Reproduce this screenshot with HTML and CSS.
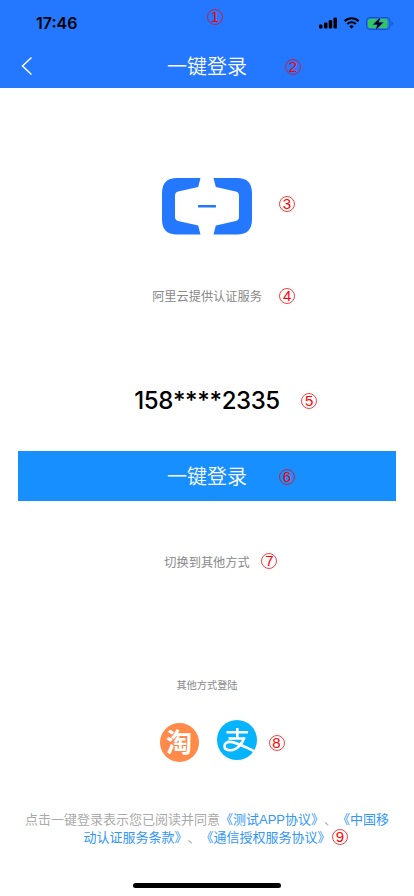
FILE: index.html
```html
<!DOCTYPE html>
<html lang="zh-CN">
<head>
<meta charset="utf-8">
<meta name="viewport" content="width=device-width, initial-scale=1">
<title>一键登录</title>
<link rel="stylesheet" href="styles.css">
</head>
<body>
<main class="screen">
  <header class="header">
    <div class="status">
      <span class="time">17:46</span>
      <svg class="status-icons" width="76" height="16" viewBox="0 0 76 16">
        <g fill="#000">
          <rect x="1" y="9.500" width="3.500" height="4" rx="1"/>
          <rect x="6" y="7.500" width="3.500" height="6" rx="1"/>
          <rect x="10.700" y="5" width="3.500" height="8.500" rx="1"/>
          <rect x="15.500" y="2.500" width="3.500" height="11" rx="1"/>
        </g>
        <g fill="none" stroke="#000" stroke-width="2.200">
          <path d="M26.600 6.100a10 10 0 0 1 14 0"/>
          <path d="M29.300 9a6.200 6.200 0 0 1 8.600 0"/>
        </g>
        <path d="M31.300 11.200a3.400 3.400 0 0 1 4.600 0L33.600 13.700z"/>
        <rect x="48.500" y="2.500" width="23.500" height="12" rx="3.500" fill="none" stroke="#1754b3"/>
        <path d="M73.500 6.500v4q1.400-.7 1.400-2t-1.400-2" fill="#1754b3"/>
        <rect x="50" y="4" width="19.500" height="9" rx="2" fill="#34c759"/>
        <path d="M62.300 2.500l-7 7h4.300l-1.800 5.200 7.200-7.200h-4.400z" fill="#000" stroke="#2478ff" stroke-width="1.200" paint-order="stroke"/>
      </svg>
      <i class="mark m1">1</i>
    </div>
    <div class="nav">
      <svg class="back" width="12" height="20" viewBox="0 0 12 20"><path d="M10.500 1.500L1.500 10l9 8.500" fill="none" stroke="#fff" stroke-width="1.500"/></svg>
      <h1 class="title">一键登录</h1>
      <i class="mark m2">2</i>
    </div>
  </header>
  <section class="brand">
    <svg class="logo" width="90" height="57" viewBox="0 0 90 57">
      <g fill="#2478ff">
        <path d="M38.500 0H15Q0 0 0 15v26.500q0 15 15 15h23.500l-2.300-9-20-4.500q-3.200-.8-3.200-4v-21.500q0-3.200 3.200-4l20-4.500z"/>
        <path d="M51.500 0H75q15 0 15 15v26.500q0 15-15 15H51.500l2.300-9 20-4.500q3.200-.8 3.200-4v-21.500q0-3.200-3.200-4l-20-4.500z"/>
        <rect x="36" y="27" width="18" height="2.600" rx=".5"/>
      </g>
    </svg>
    <i class="mark m3">3</i>
  </section>
  <p class="slogan">阿里云提供认证服务<i class="mark m4">4</i></p>
  <p class="phone">158<span class="stars">****</span>2335<i class="mark m5">5</i></p>
  <button class="login">一键登录<i class="mark m6">6</i></button>
  <p class="switch">切换到其他方式<i class="mark m7">7</i></p>
  <p class="other">其他方式登陆</p>
  <div class="providers">
    <span class="taobao">淘</span>
    <svg class="alipay" width="40" height="40" viewBox="0 0 40 40">
      <defs><clipPath id="disc"><circle cx="20" cy="20" r="20"/></clipPath></defs>
      <circle cx="20" cy="20" r="20" fill="#06b4fd"/>
      <g clip-path="url(#disc)" fill="none" stroke="#fff" stroke-width="2.600">
        <path d="M9.500 12.300h21.500M20.300 8v10.500M11.500 18.500h16"/>
        <path d="M27.500 17.300C25.500 23 20.500 30.200 13.500 30.200c-4 0-6-1.700-6-4 0-2.600 2.300-4.300 5.300-4.300 6 0 11.700 3.500 24.500 9.300"/>
      </g>
    </svg>
    <i class="mark m8">8</i>
  </div>
  <p class="legal">点击一键登录表示您已阅读并同意<a>《测试<span class="latin">APP</span>协议》</a>、<a>《中国移<br>动认证服务条款》</a>、<a>《通信授权服务协议》</a><i class="mark m9">9</i></p>
  <div class="home-bar"></div>
</main>
</body>
</html>
```

FILE: styles.css
```css
* { box-sizing: border-box; }
body {
  margin: 0;
  background: #fff;
  font-family: "Noto Sans CJK SC", sans-serif;
}
.screen {
  width: 414px;
  height: 896px;
  display: flex;
  flex-direction: column;
  align-items: center;
  overflow: hidden;
}
p, h1 { margin: 0; font-weight: 400; }
.header { width: 100%; height: 88px; background: #2478ff; }
.status {
  position: relative;
  height: 44px;
  padding: 2px 20px 0 36px;
  display: flex;
  justify-content: space-between;
  align-items: center;
}
.time { font: 600 16px/20px Inter, sans-serif; }
.nav {
  position: relative;
  height: 44px;
  padding-left: 21px;
  display: grid;
  grid-template-columns: 12px 1fr 33px;
  align-items: center;
}
.title { color: #fff; font-size: 20px; line-height: 30px; font-weight: 350; text-align: center; }
.brand { position: relative; margin-top: 90px; height: 57px; }
.logo { display: block; }
.slogan, .phone, .login, .switch, .providers, .legal { position: relative; }
.slogan { margin-top: 51px; font-size: 12.200px; line-height: 20px; color: #888; }
.phone { margin-top: 79px; font: 500 24px/32px Inter, sans-serif; letter-spacing: -.4px; color: #000; }
.stars { letter-spacing: -.3px; }
.login {
  width: 378px;
  height: 50px;
  margin-top: 34px;
  padding: 0;
  border: 0;
  background: #188fff;
  color: #fff;
  font: 350 20px/50px "Noto Sans CJK SC", sans-serif;
}
.switch { margin-top: 51px; font-size: 12.200px; line-height: 20px; color: #888; }
.other { margin-top: 105px; font-size: 10.200px; line-height: 16px; color: #888; }
.providers { margin-top: 27px; padding-left: 2px; height: 42px; display: flex; gap: 18px; }
.taobao {
  width: 39px;
  height: 39px;
  margin-top: 3px;
  border-radius: 50%;
  background: #ff8a4a;
  color: #fff;
  font-size: 26px;
  font-weight: 700;
  line-height: 36px;
  text-align: center;
}
.legal { margin-top: 48px; font-size: 13px; line-height: 18px; color: #aaa; text-align: center; white-space: nowrap; text-spacing-trim: space-all; }
.legal a { color: #3296fa; }
.latin { font-family: "Liberation Sans", sans-serif; line-height: 0; }
.home-bar { width: 148px; height: 5px; margin-top: 37px; border-radius: 3px; background: #000; flex: none; }
.mark {
  position: absolute;
  width: 16px;
  height: 16px;
  border: 1px solid rgba(255, 0, 0, .75);
  border-radius: 50%;
  font: 400 15px/13px "Liberation Sans", sans-serif;
  letter-spacing: 0;
  color: #f00;
  text-align: center;
}
.m1 { left: 207px; top: 9px; }
.m2 { left: 285px; top: 15px; }
.m3 { left: 117px; top: 18px; }
.m4 { left: 127px; top: 2px; }
.m5 { left: 167px; top: 8px; }
.m6 { left: 261px; top: 18px; }
.m7 { left: 97px; top: 1px; }
.m8 { left: 111px; top: 15px; }
.m9 { left: 307px; top: 19px; }
```
